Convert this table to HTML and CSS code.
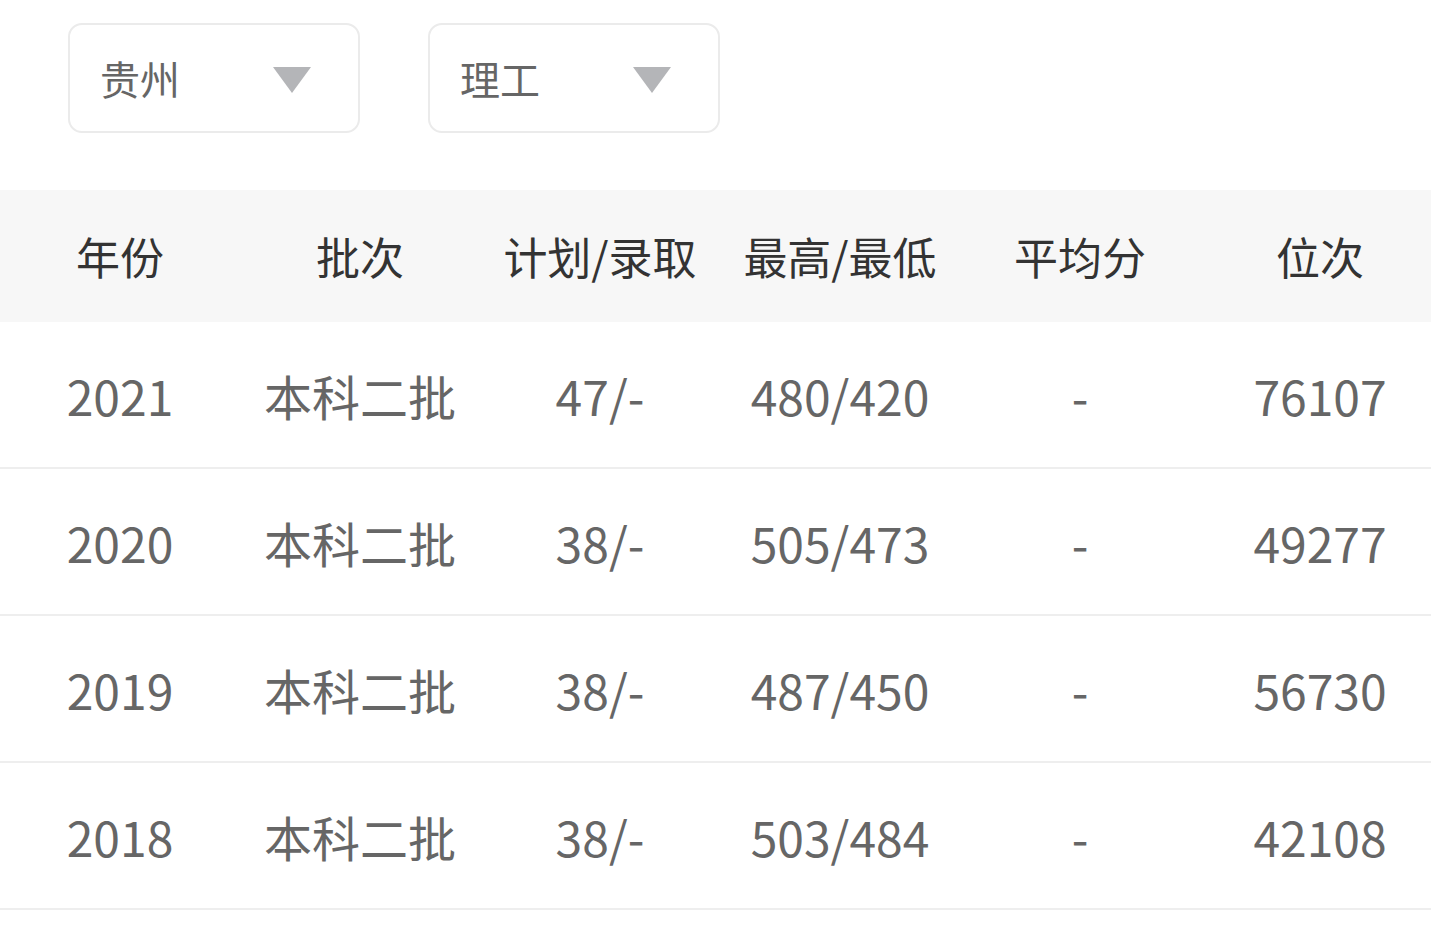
FILE: index.html
```html
<!DOCTYPE html>
<html lang="zh-CN">
<head>
<meta charset="utf-8">
<title>录取分数</title>
<link rel="stylesheet" href="styles.css">
</head>
<body>
<div class="page">
  <div class="filters">
    <div class="select"><span class="select-label">贵州</span><span class="caret"></span></div>
    <div class="select"><span class="select-label">理工</span><span class="caret"></span></div>
  </div>
  <div class="table">
    <div class="row head">
      <div class="cell">年份</div>
      <div class="cell">批次</div>
      <div class="cell">计划/录取</div>
      <div class="cell">最高/最低</div>
      <div class="cell">平均分</div>
      <div class="cell">位次</div>
    </div>
    <div class="row">
      <div class="cell">2021</div>
      <div class="cell">本科二批</div>
      <div class="cell">47/-</div>
      <div class="cell">480/420</div>
      <div class="cell">-</div>
      <div class="cell">76107</div>
    </div>
    <div class="row">
      <div class="cell">2020</div>
      <div class="cell">本科二批</div>
      <div class="cell">38/-</div>
      <div class="cell">505/473</div>
      <div class="cell">-</div>
      <div class="cell">49277</div>
    </div>
    <div class="row">
      <div class="cell">2019</div>
      <div class="cell">本科二批</div>
      <div class="cell">38/-</div>
      <div class="cell">487/450</div>
      <div class="cell">-</div>
      <div class="cell">56730</div>
    </div>
    <div class="row">
      <div class="cell">2018</div>
      <div class="cell">本科二批</div>
      <div class="cell">38/-</div>
      <div class="cell">503/484</div>
      <div class="cell">-</div>
      <div class="cell">42108</div>
    </div>
  </div>
</div>
</body>
</html>
```
FILE: styles.css
```css
html, body {
  margin: 0;
  padding: 0;
  background: #ffffff;
}
body {
  font-family: "Noto Sans CJK SC", "Noto Sans", sans-serif;
  overflow: hidden;
}
.page {
  width: 1431px;
  overflow: hidden;
}
.filters {
  display: flex;
  gap: 68px;
  padding: 23px 0 0 68px;
  height: 190px;
  box-sizing: border-box;
}
.select {
  width: 292px;
  height: 110px;
  box-sizing: border-box;
  border: 2px solid #ebebeb;
  border-radius: 14px;
  display: flex;
  align-items: center;
  justify-content: space-between;
  padding: 0 47px 0 30px;
}
.select-label {
  font-size: 40px;
  color: #666666;
  line-height: 1;
}
.caret {
  width: 0;
  height: 0;
  border-left: 19px solid transparent;
  border-right: 19px solid transparent;
  border-top: 26px solid #b4b5b8;
  margin-top: 4px;
}
.table {
  width: 1440px;
}
.row {
  display: grid;
  grid-template-columns: repeat(6, 240px);
  height: 147px;
  box-sizing: border-box;
  border-bottom: 2px solid #eeeeee;
  align-items: center;
  color: #666666;
  font-size: 48px;
}
.row.head {
  height: 132px;
  background: #f7f7f7;
  border-bottom: none;
  color: #333333;
  font-size: 44px;
}
.cell {
  text-align: center;
  white-space: nowrap;
  line-height: 1;
}
```
